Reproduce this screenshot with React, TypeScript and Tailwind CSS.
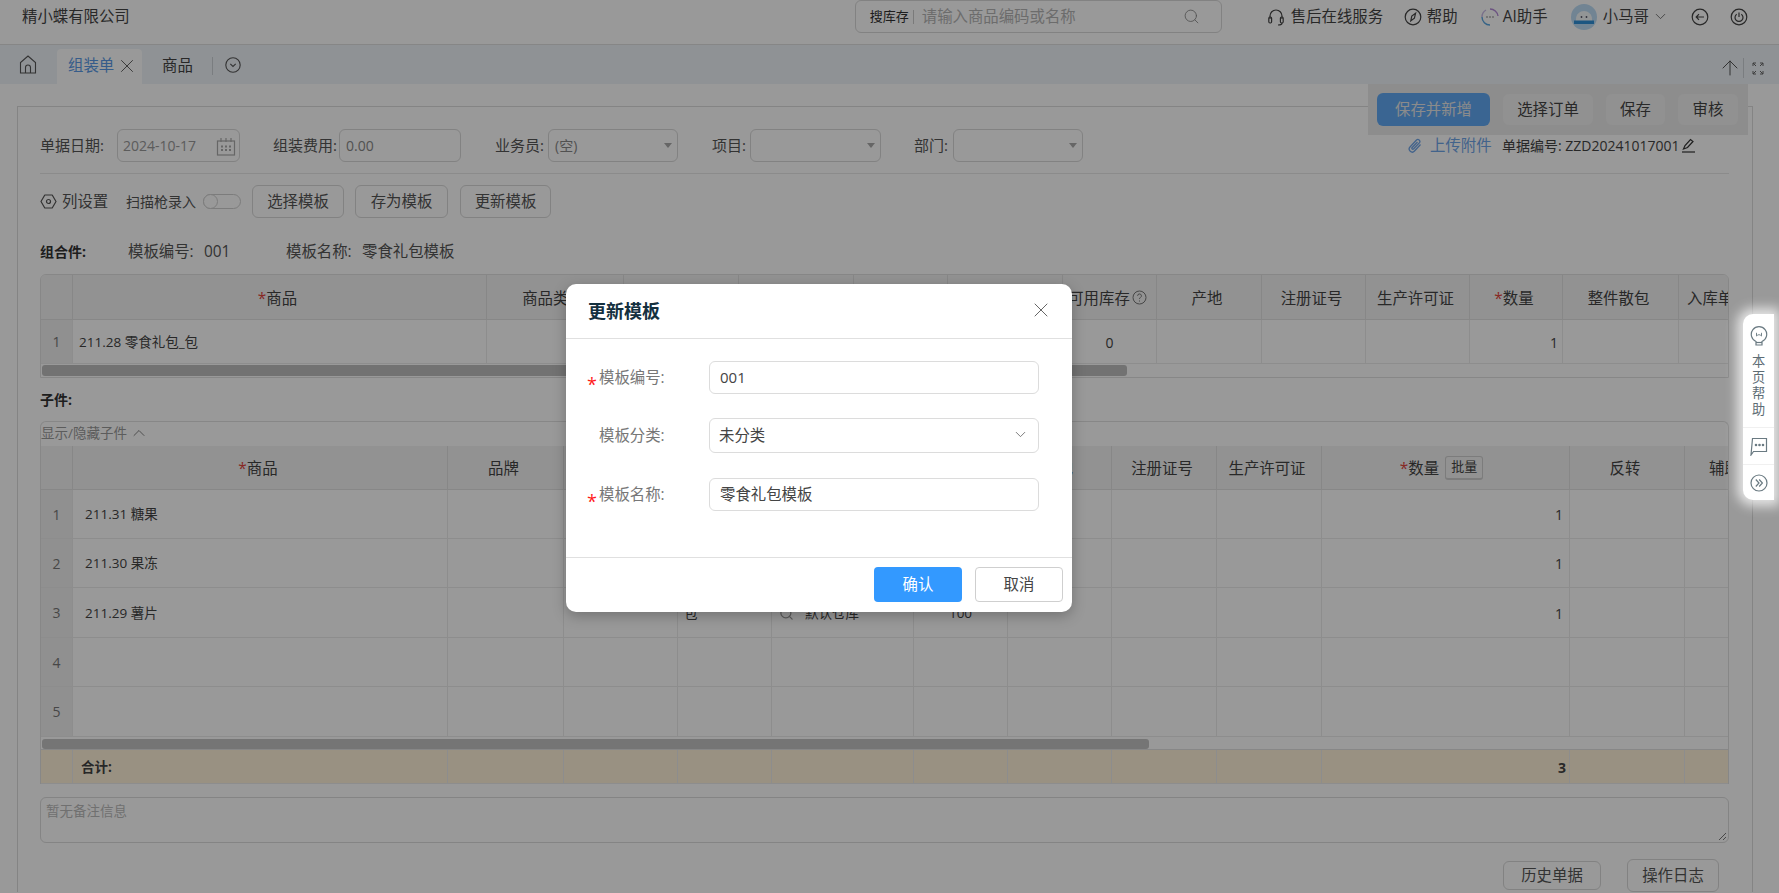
import React from "react";
import { X, Search, ChevronDown, ChevronUp, ArrowUp } from "lucide-react";

const Box = ({ w, children, cls = "" }: { w: string; children?: React.ReactNode; cls?: string }) => (
  <div className={`${w} h-[33px] border border-[#d9d9d9] rounded-[6px] flex items-center relative shrink-0 ${cls}`}>{children}</div>
);

const Caret = () => (
  <svg className="absolute right-[5px] top-[13px]" width="8" height="5" viewBox="0 0 8 5"><path d="M0 0h8l-4 5z" fill="#aaa" /></svg>
);

const Btn = ({ w, children, h = "h-[33px]" }: { w: string; children: React.ReactNode; h?: string }) => (
  <div className={`${w} ${h} border border-[#d9d9d9] rounded-[6px] flex items-center justify-center pt-[1px] text-[15.4px] text-[#555] shrink-0`}>{children}</div>
);

const Req = () => <span className="text-[#e2463c]">*</span>;

const Th = ({ children, cls = "" }: { children?: React.ReactNode; cls?: string }) => (
  <div className={`border-r border-b border-[#e2e2e2] bg-[#f3f3f3] flex items-center justify-center pr-[4px] text-[15.4px] text-[#444] whitespace-nowrap overflow-hidden min-w-0 ${cls}`}>{children}</div>
);

const Td = ({ children, cls = "" }: { children?: React.ReactNode; cls?: string }) => (
  <div className={`border-r border-b border-[#ebebeb] flex items-center pt-[1px] text-[13.5px] text-[#444] whitespace-nowrap overflow-hidden min-w-0 ${cls}`}>{children}</div>
);

const Idx = ({ n }: { n: number }) => (
  <div className="border-r border-b border-[#ebebeb] bg-[#f0f0f0] flex items-center justify-center text-[14px] text-[#777]">{n}</div>
);

const G1 = "grid grid-cols-[32px_414px_137px_115px_115px_94px_115px_94px_105px_104px_104px_93px_116px_minmax(0,1fr)]";
const G2 = "grid grid-cols-[32px_375px_116px_114px_94px_142px_94px_104px_105px_105px_248px_115px_minmax(0,1fr)]";

function Header() {
  return (
    <div className="h-[45px] border-b border-[#e0e0e0] flex items-start shrink-0">
      <div className="ml-[22px] mt-[5px] text-[15.4px] text-[#444] leading-[24px] whitespace-nowrap">精小蝶有限公司</div>
      <div className="ml-[725px] w-[367px] h-[33px] border border-[#d9d9d9] rounded-[6px] flex items-center pl-[14px] relative shrink-0">
        <span className="text-[13px] text-[#333]">搜库存</span>
        <span className="w-px h-[14px] bg-[#ccc] ml-[4px]" />
        <span className="text-[15.4px] text-[#b5b5b5] ml-[8px]">请输入商品编码或名称</span>
        <Search size={17} strokeWidth={1.2} className="absolute right-[21px] top-[7px] text-[#888]" />
      </div>
      <div className="flex items-center h-[33px] text-[15.4px] text-[#444] whitespace-nowrap">
        <svg className="ml-[45px] shrink-0" width="18" height="18" viewBox="0 0 18 18" fill="none" stroke="#444" strokeWidth="1.2"><path d="M3 11V8a6 6 0 0 1 12 0v3" /><rect x="1.8" y="9" width="2.8" height="6" rx="1.2" /><rect x="13.4" y="9" width="2.8" height="6" rx="1.2" /><path d="M15 15c0 1.5-2 2-4 2" /></svg>
        <span className="ml-[6px] w-[92px]">售后在线服务</span>
        <svg className="ml-[21px] shrink-0" width="18" height="18" viewBox="0 0 18 18" fill="none" stroke="#444" strokeWidth="1.2"><circle cx="9" cy="9" r="7.8" /><path d="M11.6 5.2 10.400 10.200 6.800 12.800 7.800 8z" /></svg>
        <span className="ml-[5px] w-[30px]">帮助</span>
        <svg className="ml-[23px] shrink-0" width="20" height="20" viewBox="0 0 20 20" fill="none" strokeWidth="1.4"><path d="M10 2a8 8 0 0 1 8 7" stroke="#b48ad8" /><path d="M2 10a8 8 0 0 0 8 8" stroke="#5aa6e0" /><path d="M2 10a8 8 0 0 1 4-7" stroke="#c9b9e6" /><circle cx="7" cy="10" r="0.8" fill="#777" /><circle cx="10" cy="10" r="0.8" fill="#777" /><circle cx="13" cy="10" r="0.8" fill="#777" /></svg>
        <span className="ml-[3px] w-[46px]">AI助手</span>
        <svg className="ml-[22px] shrink-0" width="26" height="26" viewBox="0 0 26 26"><circle cx="13" cy="13" r="13" fill="#bcdcf5" /><path d="M5 15c0-5 4-8 8-8s8 3 8 8v2H5z" fill="#f4f8fb" /><rect x="3" y="16.5" width="20" height="3.5" fill="#2f8fd8" /><circle cx="10.5" cy="13" r="0.9" fill="#556" /><circle cx="15.5" cy="13" r="0.9" fill="#556" /></svg>
        <span className="ml-[6px] w-[48px]">小马哥</span>
        <ChevronDown size={17} strokeWidth={1.1} className="ml-[1px] text-[#555] shrink-0" />
        <svg className="ml-[22px] shrink-0" width="18" height="18" viewBox="0 0 18 18" fill="none" stroke="#444" strokeWidth="1.2"><circle cx="9" cy="9" r="7.8" /><path d="M13 9H5.5M8 6.2 5.2 9 8 11.800" /></svg>
        <svg className="ml-[21px] shrink-0" width="18" height="18" viewBox="0 0 18 18" fill="none" stroke="#444" strokeWidth="1.2"><circle cx="9" cy="9" r="7.8" /><path d="M6.700 6.200a4 4 0 1 0 4.600 0M9 4.500V9" /></svg>
      </div>
    </div>
  );
}

function Tabs() {
  return (
    <div className="h-[39px] bg-[#eef3f9] flex items-end shrink-0 relative">
      <svg className="ml-[19px] mb-[10px] shrink-0" width="18" height="19" viewBox="0 0 18 19" fill="none" stroke="#555" strokeWidth="1.1"><path d="M1.500 18V7.500L9 1l7.500 6.500V18z" /><path d="M6.500 18v-5.500a2.500 2.500 0 0 1 5 0V18" /></svg>
      <div className="ml-[20px] w-[85px] h-[35px] bg-white rounded-t-[4px] flex items-center pl-[11px] pb-[2px]">
        <span className="text-[15.4px] text-[#5a9ae6] shrink-0">组装单</span>
        <X size={22} strokeWidth={1} className="ml-[2px] text-[#555] shrink-0" />
      </div>
      <div className="ml-[20px] h-[35px] flex items-center pb-[2px] text-[15.4px] text-[#444]">商品</div>
      <div className="ml-[19px] mb-[9px] w-px h-[18px] bg-[#ccd0d6]" />
      <svg className="ml-[12px] mb-[11px] shrink-0" width="16" height="16" viewBox="0 0 16 16" fill="none" stroke="#555" strokeWidth="1.1"><circle cx="8" cy="8" r="7.200" /><path d="M5.300 6.800 8 9.500l2.700-2.700" /></svg>
      <div className="ml-auto flex items-center mb-[4px] mr-[15px]">
        <ArrowUp size={24} strokeWidth={1} className="text-[#555] shrink-0" />
        <div className="w-px h-[20px] bg-[#ccd0d6] ml-[1px]" />
        <svg className="ml-[8px] shrink-0" width="12" height="13" viewBox="0 0 12 13" fill="none" stroke="#666" strokeWidth="1"><path d="M1 4V1h3M8 1h3v3M11 9v3H8M4 12H1V9M1 1l3 3M11 1 8 4M11 12 8 9M1 12l3-3" /></svg>
      </div>
    </div>
  );
}

function FormRow() {
  return (
    <div className="flex items-center h-[33px] text-[15px] text-[#555] whitespace-nowrap">
      <span className="w-[77px] shrink-0">单据日期:</span>
      <Box w="w-[123px]">
        <span className="ml-[5px] text-[14px] text-[#999]">2024-10-17</span>
        <svg className="absolute right-[3px] top-[7px]" width="20" height="19" viewBox="0 0 20 19" fill="none" stroke="#aaa" strokeWidth="1.2"><rect x="1.500" y="4" width="17" height="14" /><path d="M5 1v4M10 1v4M15 1v4" /><path d="M5 9.500h2M9 9.500h2M13 9.500h2M5 13h2M9 13h2M13 13h2" strokeWidth="1.800" /></svg>
      </Box>
      <span className="ml-[33px] w-[66px] shrink-0">组装费用:</span>
      <Box w="w-[122px]"><span className="ml-[6px] text-[14px] text-[#888]">0.00</span></Box>
      <span className="ml-[34px] w-[53px] shrink-0">业务员:</span>
      <Box w="w-[130px]"><span className="ml-[6px] text-[14px] text-[#888]">(空)</span><Caret /></Box>
      <span className="ml-[34px] w-[38px] shrink-0">项目:</span>
      <Box w="w-[131px]"><Caret /></Box>
      <span className="ml-[33px] w-[39px] shrink-0">部门:</span>
      <Box w="w-[130px]"><Caret /></Box>
      <svg className="ml-[324px] shrink-0" width="16" height="16" viewBox="0 0 16 16" fill="none" stroke="#6fa5e8" strokeWidth="1.300"><path d="M13.500 6.500 7.500 13a3 3 0 0 1-4.500-4l6.500-7a2 2 0 0 1 3 2.600L6.500 11a1 1 0 0 1-1.500-1.300L10.500 4" /></svg>
      <span className="ml-[7px] text-[15.4px] text-[#6fa5e8] w-[61px] shrink-0">上传附件</span>
      <span className="ml-[11px] text-[14px] text-[#444]">单据编号: ZZD20241017001</span>
      <svg className="ml-[1px] shrink-0" width="15" height="15" viewBox="0 0 15 15" fill="none" stroke="#333" strokeWidth="1.200"><path d="M2.500 11 4 7.500 9.500 1.500l2.500 2L6.500 9.500z" /><path d="M1 14h13" /></svg>
    </div>
  );
}

function Toolbar() {
  return (
    <div className="flex items-center h-[33px] text-[15.4px] text-[#555] whitespace-nowrap">
      <svg className="shrink-0" width="17" height="15" viewBox="0 0 17 15" fill="none" stroke="#555" strokeWidth="1.200"><path d="M4.800 1h7.400l3.800 6.500-3.800 6.500H4.800L1 7.500z" strokeLinejoin="round" /><circle cx="8.500" cy="7.500" r="2" /></svg>
      <span className="ml-[5px] w-[47px] shrink-0 pt-[1px]">列设置</span>
      <span className="ml-[17px] w-[77px] shrink-0 text-[14px]">扫描枪录入</span>
      <div className="w-[38px] h-[15px] border border-[#cfcfcf] rounded-full relative shrink-0">
        <div className="w-[15px] h-[15px] border border-[#cfcfcf] rounded-full absolute -left-px -top-px bg-white" />
      </div>
      <div className="ml-[11px]"><Btn w="w-[92px]">选择模板</Btn></div>
      <div className="ml-[11px]"><Btn w="w-[93px]">存为模板</Btn></div>
      <div className="ml-[12px]"><Btn w="w-[91px]">更新模板</Btn></div>
    </div>
  );
}

function Table1() {
  return (
    <div className="mt-[13px] w-[1689px] h-[104px] border border-[#e2e2e2] rounded-t-[6px] overflow-hidden">
      <div className={`${G1} h-[45px]`}>
        <Th />
        <Th cls="pt-[3px]"><Req />商品</Th>
        <Th cls="pt-[3px]">商品类别</Th>
        <Th cls="pt-[3px]">品牌</Th>
        <Th cls="pt-[3px]">规格</Th>
        <Th cls="pt-[3px]">单位</Th>
        <Th cls="pt-[3px]">仓库</Th>
        <Th cls="pr-0">
          <span className="pt-[3px]">可用库存</span>
          <svg className="ml-[2px] shrink-0" width="15" height="15" viewBox="0 0 15 15" fill="none" stroke="#777" strokeWidth="1"><circle cx="7.500" cy="7.500" r="6.500" /><path d="M5.600 5.800a1.900 1.900 0 1 1 2.800 1.700c-.6.300-.9.700-.9 1.400M7.500 10.500v1" /></svg>
        </Th>
        <Th cls="pt-[3px]">产地</Th>
        <Th cls="pt-[3px]">注册证号</Th>
        <Th cls="pt-[3px]">生产许可证</Th>
        <Th cls="pt-[3px]"><Req />数量</Th>
        <Th cls="pt-[3px]">整件散包</Th>
        <Th cls="pt-[3px] justify-start pl-[8px] pr-0 border-r-0">入库单价</Th>
      </div>
      <div className={`${G1} h-[44px]`}>
        <Idx n={1} />
        <Td cls="pl-[6px]">211.28 零食礼包_包</Td>
        <Td /><Td /><Td /><Td /><Td />
        <Td cls="justify-center text-[14px]">0</Td>
        <Td /><Td /><Td />
        <Td cls="justify-end pr-[4px] text-[14px]">1</Td>
        <Td /><Td cls="border-r-0" />
      </div>
      <div className="h-[14px] pt-[1px] pl-[1px]">
        <div className="w-[1085px] h-[11px] bg-[#bfbfbf] rounded-[3px]" />
      </div>
    </div>
  );
}

function Row2({ n, name, extra }: { n: number; name?: string; extra?: boolean }) {
  const h = n === 1 || n === 2 ? "h-[49px]" : n === 3 ? "h-[50px]" : n === 4 ? "h-[49px]" : "h-[50px]";
  return (
    <div className={`${G2} ${h}`}>
      <Idx n={n} />
      <Td cls="pl-[12px]">{name}</Td>
      <Td /><Td />
      <Td cls="pl-[6px]">{extra ? "包" : ""}</Td>
      <Td cls="pl-[7px]">
        {extra && <Search size={15} strokeWidth={2} className="text-[#999] mr-[11px] shrink-0" />}
        {extra ? "默认仓库" : ""}
      </Td>
      <Td cls="justify-center">{extra ? "100" : ""}</Td>
      <Td /><Td /><Td />
      <Td cls="justify-end pr-[6px] text-[14px] text-[#1f7aa8]">{name ? "1" : ""}</Td>
      <Td /><Td cls="border-r-0" />
    </div>
  );
}

function Table2() {
  return (
    <div className="mt-[12px] w-[1689px] border-t border-x border-[#e2e2e2] rounded-t-[6px] overflow-hidden">
      <div className="h-[24px] flex items-center pb-[2px] text-[13.5px] text-[#999] whitespace-nowrap">
        显示/隐藏子件
        <ChevronUp size={20} strokeWidth={1.1} className="ml-[2px] text-[#777] shrink-0" />
      </div>
      <div className={`${G2} h-[44px]`}>
        <Th />
        <Th cls="pr-0 pt-[3px]"><Req />商品</Th>
        <Th cls="pt-[3px]">品牌</Th>
        <Th cls="pt-[3px]">规格</Th>
        <Th cls="pt-[3px]">单位</Th>
        <Th cls="pt-[3px]">仓库</Th>
        <Th cls="pt-[3px]">单价</Th>
        <Th cls="pt-[3px]">产地</Th>
        <Th cls="pt-[3px]">注册证号</Th>
        <Th cls="pt-[3px]">生产许可证</Th>
        <Th cls="pr-[8px]">
          <span className="pt-[3px]"><Req />数量</span>
          <span className="ml-[6px] w-[38px] h-[24px] border border-[#cfcfcf] border-b-2 rounded-[3px] flex items-center justify-center text-[13px]">批量</span>
        </Th>
        <Th cls="pt-[3px]">反转</Th>
        <Th cls="pt-[3px] justify-start pl-[24px] pr-0 border-r-0">辅助数量</Th>
      </div>
      <Row2 n={1} name="211.31 糖果" />
      <Row2 n={2} name="211.30 果冻" />
      <Row2 n={3} name="211.29 薯片" extra />
      <Row2 n={4} />
      <Row2 n={5} />
      <div className="h-[13px] pt-[2px] pl-[1px] border-b border-[#e2e2e2]">
        <div className="w-[1107px] h-[10px] bg-[#c4c4c4] rounded-[3px]" />
      </div>
      <div className={`${G2} h-[34px] bg-[#fff2d9]`}>
        <Td cls="border-[#eadfc9]" />
        <Td cls="border-[#eadfc9] pl-[8px] font-bold text-[#333]">合计:</Td>
        <Td cls="border-[#eadfc9]" /><Td cls="border-[#eadfc9]" /><Td cls="border-[#eadfc9]" /><Td cls="border-[#eadfc9]" /><Td cls="border-[#eadfc9]" /><Td cls="border-[#eadfc9]" /><Td cls="border-[#eadfc9]" /><Td cls="border-[#eadfc9]" />
        <Td cls="border-[#eadfc9] justify-end pr-[3px] font-bold text-[#333] text-[14px]">3</Td>
        <Td cls="border-[#eadfc9]" /><Td cls="border-[#eadfc9] border-r-0" />
      </div>
    </div>
  );
}

function Card() {
  return (
    <div className="ml-[17px] mt-[22px] w-[1736px] border-x border-t border-[#dcdcdc] pl-[22px] pt-[22px]">
      <FormRow />
      <div className="mt-[11px] w-[1689px] h-px bg-[#e8e8e8]" />
      <div className="mt-[11px]"><Toolbar /></div>
      <div className="mt-[23px] h-[20px] flex items-center text-[15.4px] text-[#555] whitespace-nowrap">
        <span className="font-bold w-[88px] text-[#333] text-[14px]">组合件:</span>
        <span className="w-[76px] pt-[2px]">模板编号:</span>
        <span className="w-[82px] text-[15.4px] pt-[2px]">001</span>
        <span className="w-[76px] pt-[2px]">模板名称:</span>
        <span className="pt-[2px]">零食礼包模板</span>
      </div>
      <Table1 />
      <div className="mt-[11px] h-[20px] flex items-center text-[14px] font-bold text-[#333]">子件:</div>
      <Table2 />
      <div className="mt-[13px] w-[1689px] h-[46px] border border-[#dcdcdc] rounded-[6px] pl-[5px] pt-[3px] text-[13.5px] text-[#bbb] relative">
        暂无备注信息
        <svg className="absolute right-[1px] bottom-[1px]" width="9" height="9" viewBox="0 0 9 9" stroke="#777" strokeWidth="1"><path d="M1 8 8 1M5 8l3-3" /></svg>
      </div>
      <div className="mt-[16px] flex justify-end items-start pr-[33px]">
        <div className="mt-[2px]"><Btn w="w-[98px]" h="h-[29px]">历史单据</Btn></div>
        <div className="ml-[26px]"><Btn w="w-[92px]">操作日志</Btn></div>
      </div>
    </div>
  );
}

function ActionBar() {
  const cls = "rounded-[6px] bg-[#fff]/30 flex items-center justify-center text-[15.4px] text-[#444]";
  return (
    <div className="absolute left-[1368px] top-[84px] w-[380px] h-[51px] bg-[#ececec] flex items-center pl-[9px] gap-[13px]">
      <div className="w-[113px] h-[33px] rounded-[6px] bg-[#61a9f4] flex items-center justify-center text-[15.4px] text-[#e8e8e8]">保存并新增</div>
      <div className={`w-[90px] h-[31px] ${cls}`}>选择订单</div>
      <div className={`w-[59px] h-[31px] ${cls}`}>保存</div>
      <div className={`w-[60px] h-[31px] ${cls}`}>审核</div>
    </div>
  );
}

function Star() {
  return <span className="absolute left-[-1px] top-[14px] text-[18px] leading-[18px] text-[#ff1a1a]">*</span>;
}

function Modal() {
  const field = "w-[330px] border border-[#dcdcdc] rounded-[6px] flex items-center text-[#444] shrink-0";
  const label = "w-[121px] shrink-0 text-[15.4px] text-[#777] pl-[11px]";
  return (
    <div className="absolute left-[566px] top-[284px] w-[506px] h-[328px] bg-white rounded-[10px] shadow-[0_4px_14px_rgba(0,0,0,0.25)] flex flex-col">
      <div className="h-[55px] border-b border-[#e0e0e0] flex items-center pl-[22px] pr-[19px] shrink-0">
        <span className="text-[18px] font-bold text-[#14303f]">更新模板</span>
        <X size={24} strokeWidth={1} className="ml-auto mb-[2px] text-[#666]" />
      </div>
      <div className="h-[219px] border-b border-[#e0e0e0] pl-[22px] pt-[22px] shrink-0">
        <div className="flex items-center h-[33px] relative">
          <Star />
          <span className={label}>模板编号:</span>
          <div className={`${field} h-[33px] pl-[10px] text-[15px]`}>001</div>
        </div>
        <div className="flex items-center h-[35px] mt-[24px]">
          <span className={label}>模板分类:</span>
          <div className={`${field} h-[35px] pl-[9px] pt-[1px] text-[15.4px] relative`}>
            未分类
            <ChevronDown size={17} strokeWidth={1.2} className="absolute right-[9px] top-[7px] text-[#666]" />
          </div>
        </div>
        <div className="flex items-center h-[33px] mt-[25px] relative">
          <Star />
          <span className={label}>模板名称:</span>
          <div className={`${field} h-[33px] pl-[10px] text-[15.4px]`}>零食礼包模板</div>
        </div>
      </div>
      <div className="flex-1 flex items-center justify-end pr-[9px] pb-[1px] gap-[13px]">
        <div className="w-[88px] h-[35px] bg-[#3399ff] rounded-[4px] flex items-center justify-center text-[15.4px] text-white">确认</div>
        <div className="w-[88px] h-[35px] border border-[#cfcfcf] rounded-[4px] flex items-center justify-center text-[15.4px] text-[#444]">取消</div>
      </div>
    </div>
  );
}

function SidePanel() {
  return (
    <div className="absolute left-[1743px] top-[314px] w-[31px] h-[186px] bg-white rounded-l-[10px] shadow-[0_0_12px_6px_rgba(255,255,255,0.75)] flex flex-col items-center text-[#5e6d75]">
      <div className="h-[114px] w-full border-b border-[#f0f0f0] flex flex-col items-center pt-[12px]">
        <svg width="18" height="21" viewBox="0 0 18 21" fill="none" stroke="#6a7a82" strokeWidth="1.200"><path d="M6 15.500a7.700 7.700 0 1 1 6 0V19H6z" /><path d="M6 16.500h6" /><path d="M6.500 8.500l1.200.8 1.300-.8 1.300.8 1.200-.8M6.500 6.800v3.500M11.500 6.800v3.500" strokeWidth="0.900" /></svg>
        <div className="mt-[6px] text-[13.200px] leading-[16px] w-[14px] text-center">本页帮助</div>
      </div>
      <div className="h-[37px] w-full border-b border-[#f0f0f0] flex items-center justify-center">
        <svg width="18" height="19" viewBox="0 0 18 19" fill="none" stroke="#6a7a82" strokeWidth="1.200"><path d="M2.500 1.500h14v13H3.500L1 18z" /><circle cx="6" cy="8" r="0.700" fill="#6a7a82" /><circle cx="9.500" cy="8" r="0.700" fill="#6a7a82" /><circle cx="13" cy="8" r="0.700" fill="#6a7a82" /></svg>
      </div>
      <div className="flex-1 flex items-center justify-center">
        <svg width="18" height="18" viewBox="0 0 18 18" fill="none" stroke="#6a7a82" strokeWidth="1.200"><circle cx="9" cy="9" r="8" /><path d="M5.800 5.500 9 9l-3.200 3.500M9.200 5.500 12.400 9l-3.200 3.500" /></svg>
      </div>
    </div>
  );
}

export default function App() {
  return (
    <div className="relative w-[1779px] h-[893px] overflow-hidden bg-white [font-family:'Open_Sans','Noto_Sans_CJK_SC',sans-serif]">
      <div className="flex flex-col h-[893px] overflow-hidden">
        <Header />
        <Tabs />
        <Card />
      </div>
      <ActionBar />
      <div className="absolute inset-0 bg-black/40" />
      <Modal />
      <SidePanel />
    </div>
  );
}
